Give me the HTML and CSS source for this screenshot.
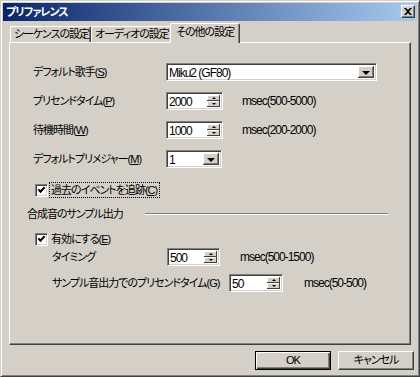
FILE: index.html
```html
<!DOCTYPE html>
<html lang="ja">
<head>
<meta charset="utf-8">
<title>プリファレンス</title>
<link rel="stylesheet" href="styles.css">
</head>
<body>
<div class="window">
  <div class="titlebar">
    <span class="title">プリファレンス</span>
    <span class="close"><svg width="8" height="7" viewBox="0 0 8 7"><path d="M0 0h2l2 2 2-2h2L5 3.5 8 7H6L4 5 2 7H0l3-3.5z" fill="#000"/></svg></span>
  </div>
  <div class="tabs">
    <div class="tab t1">シーケンスの設定</div>
    <div class="tab t2">オーディオの設定</div>
    <div class="tab active">その他の設定</div>
  </div>
  <div class="panel">
    <div class="row r1">
      <span class="lbl">デフォルト歌手(<u>S</u>)</span>
      <div class="combo cw-wide"><span class="val">Miku2 (GF80)</span><span class="drop"></span></div>
    </div>
    <div class="row r2">
      <span class="lbl">プリセンドタイム(<u>P</u>)</span>
      <div class="spin sw57"><span class="val">2000</span><span class="arrows"><span class="up"></span><span class="dn"></span></span></div>
      <span class="unit">msec(500-5000)</span>
    </div>
    <div class="row r3">
      <span class="lbl">待機時間(<u>W</u>)</span>
      <div class="spin sw57"><span class="val">1000</span><span class="arrows"><span class="up"></span><span class="dn"></span></span></div>
      <span class="unit">msec(200-2000)</span>
    </div>
    <div class="row r4">
      <span class="lbl">デフォルトプリメジャー(<u>M</u>)</span>
      <div class="combo cw-small"><span class="val">1</span><span class="drop"></span></div>
    </div>
    <div class="row r5 chkrow">
      <span class="chk"></span><span class="chklbl focus">過去のイベントを追跡(<u>C</u>)</span>
    </div>
    <div class="row r6 group">
      <span class="grouplbl">合成音のサンプル出力</span><span class="etch"></span>
    </div>
    <div class="row r7 chkrow">
      <span class="chk"></span><span class="chklbl">有効にする(<u>E</u>)</span>
    </div>
    <div class="row r8 sub">
      <span class="lbl lbl-timing">タイミング</span>
      <div class="spin sw53"><span class="val">500</span><span class="arrows"><span class="up"></span><span class="dn"></span></span></div>
      <span class="unit">msec(500-1500)</span>
    </div>
    <div class="row r9 sub">
      <span class="lbl lbl-presend">サンプル音出力でのプリセンドタイム(G)</span>
      <div class="spin sw54"><span class="val">50</span><span class="arrows"><span class="up"></span><span class="dn"></span></span></div>
      <span class="unit">msec(50-500)</span>
    </div>
  </div>
  <div class="buttons">
    <div class="btn default">OK</div>
    <div class="btn">キャンセル</div>
  </div>
</div>
</body>
</html>
```

FILE: styles.css
```css
html, body {
  margin: 0;
  padding: 0;
  background: #d4d0c8;
}

.window {
  width: 420px;
  height: 377px;
  box-sizing: border-box;
  background: #d4d0c8;
  border: 1px solid;
  border-color: #d4d0c8 #404040 #404040 #d4d0c8;
  box-shadow: inset 1px 1px #fff, inset -1px -1px #808080;
  padding: 2px;
  font-family: "Liberation Sans", "Noto Sans CJK JP", sans-serif;
  font-size: 11px;
  letter-spacing: -1px;
  font-feature-settings: "palt" 1;
  color: #000;
  display: flex;
  flex-direction: column;
}

.titlebar {
  height: 18px;
  flex: none;
  display: flex;
  align-items: flex-start;
  justify-content: space-between;
  background: linear-gradient(to right, #0a246a, #a6caf0);
}

.title {
  color: #fff;
  font-weight: bold;
  line-height: 18px;
  padding-left: 3px;
}

.close {
  width: 14px;
  height: 13px;
  margin: 2px 2px 0 0;
  box-sizing: border-box;
  background: #d4d0c8;
  border: 1px solid;
  border-color: #fff #404040 #404040 #fff;
  box-shadow: inset -1px -1px #808080;
  display: flex;
  align-items: center;
  justify-content: center;
}

.tabs {
  height: 19px;
  flex: none;
  margin: 2px 6px 0 7px;
  display: flex;
  align-items: flex-end;
  position: relative;
  z-index: 1;
}

.tab {
  height: 16px;
  box-sizing: border-box;
  border-top: 1px solid #fff;
  border-left: 1px solid #fff;
  border-right: 1px solid #404040;
  box-shadow: inset -1px 0 #808080;
  border-radius: 2px 2px 0 0;
  padding-left: 3px;
  line-height: 15px;
  white-space: nowrap;
}

.t1 { width: 81px; }
.t2 { width: 81px; }

.tab.active {
  width: 70px;
  height: 20px;
  margin-left: -2px;
  margin-bottom: -1px;
  padding-left: 5px;
  line-height: 17px;
  background: #d4d0c8;
}

.panel {
  flex: none;
  height: 303px;
  box-sizing: border-box;
  margin: 0 6px;
  border: 1px solid;
  border-color: #fff #404040 #404040 #fff;
  box-shadow: inset -1px -1px #808080;
  padding: 20px 22px 0 23px;
}

.row {
  display: flex;
  align-items: center;
  height: 18px;
  white-space: nowrap;
}

.r2, .r3, .r4 { margin-top: 11px; }
.r5 { margin-top: 14px; height: 16px; }
.r6 { margin-top: 8px; height: 16px; }
.r7 { margin-top: 10px; height: 14px; }
.r8 { margin-top: 2px; }
.r9 { margin-top: 8px; }

.lbl {
  width: 133px;
  flex: none;
  line-height: 14px;
}

.sub { padding-left: 19px; }
.lbl-timing { width: 115px; }
.lbl-presend { width: 177px; }

.unit {
  margin-left: 19px;
  line-height: 14px;
  font-size: 12px;
}

.r8 .unit { margin-left: 20px; }
.r9 .unit { margin-left: 21px; }

.combo, .spin {
  height: 18px;
  flex: none;
  box-sizing: border-box;
  background: #fff;
  border: 1px solid;
  border-color: #808080 #fff #fff #808080;
  box-shadow: inset 1px 1px #404040, inset -1px -1px #d4d0c8;
  padding: 2px;
  display: flex;
}

.val {
  flex: 1;
  line-height: 14px;
  font-size: 12px;
}

.cw-wide { width: 211px; }
.cw-small { width: 56px; }
.sw57 { width: 57px; }
.sw53 { width: 53px; }
.sw54 { width: 54px; }

.drop {
  width: 16px;
  flex: none;
  background: #d4d0c8;
  box-shadow: inset -1px -1px #404040, inset 1px 1px #fff, inset -2px -2px #808080;
  display: flex;
  align-items: center;
  justify-content: center;
}

.drop::after {
  content: "";
  width: 0;
  height: 0;
  border-left: 4px solid transparent;
  border-right: 4px solid transparent;
  border-top: 4px solid #000;
  margin-top: 1px;
}

.arrows {
  width: 13px;
  flex: none;
  display: flex;
  flex-direction: column;
}

.up, .dn {
  flex: 1;
  background: #d4d0c8;
  box-shadow: inset -1px -1px #404040, inset 1px 1px #fff;
  display: flex;
  align-items: center;
  justify-content: center;
}

.up::after, .dn::after {
  content: "";
  width: 0;
  height: 0;
  border-left: 2px solid transparent;
  border-right: 2px solid transparent;
}

.up::after { border-bottom: 2px solid #000; }
.dn::after { border-top: 2px solid #000; }

.chkrow { padding-left: 2px; }

.chk {
  width: 13px;
  height: 13px;
  flex: none;
  box-sizing: border-box;
  background: #fff;
  border: 1px solid;
  border-color: #808080 #fff #fff #808080;
  box-shadow: inset 1px 1px #404040, inset -1px -1px #d4d0c8;
  display: flex;
  align-items: center;
  justify-content: center;
}

.chk::after {
  content: "";
  width: 5px;
  height: 2px;
  border-left: 2px solid #000;
  border-bottom: 2px solid #000;
  transform: rotate(-45deg);
  margin-top: -2px;
}

.chklbl {
  margin-left: 2px;
  padding: 0 2px 0 1px;
  line-height: 14px;
}

.focus {
  outline: 1px dotted #000;
  outline-offset: 0;
}

.group { margin-left: -6px; }

.grouplbl { line-height: 14px; }

.etch {
  flex: 1;
  margin-left: 22px;
  height: 0;
  border-top: 1px solid #808080;
  border-bottom: 1px solid #fff;
}

.buttons {
  display: flex;
  justify-content: flex-end;
  gap: 7px;
  margin: 6px 3px 0 0;
}

.btn {
  width: 76px;
  height: 19px;
  box-sizing: border-box;
  border: 1px solid;
  border-color: #fff #404040 #404040 #fff;
  box-shadow: inset -1px -1px #808080;
  text-align: center;
  line-height: 17px;
}

.btn.default {
  border-color: #000;
  box-shadow: inset 1px 1px #fff, inset -1px -1px #404040, inset -2px -2px #808080;
}
```
